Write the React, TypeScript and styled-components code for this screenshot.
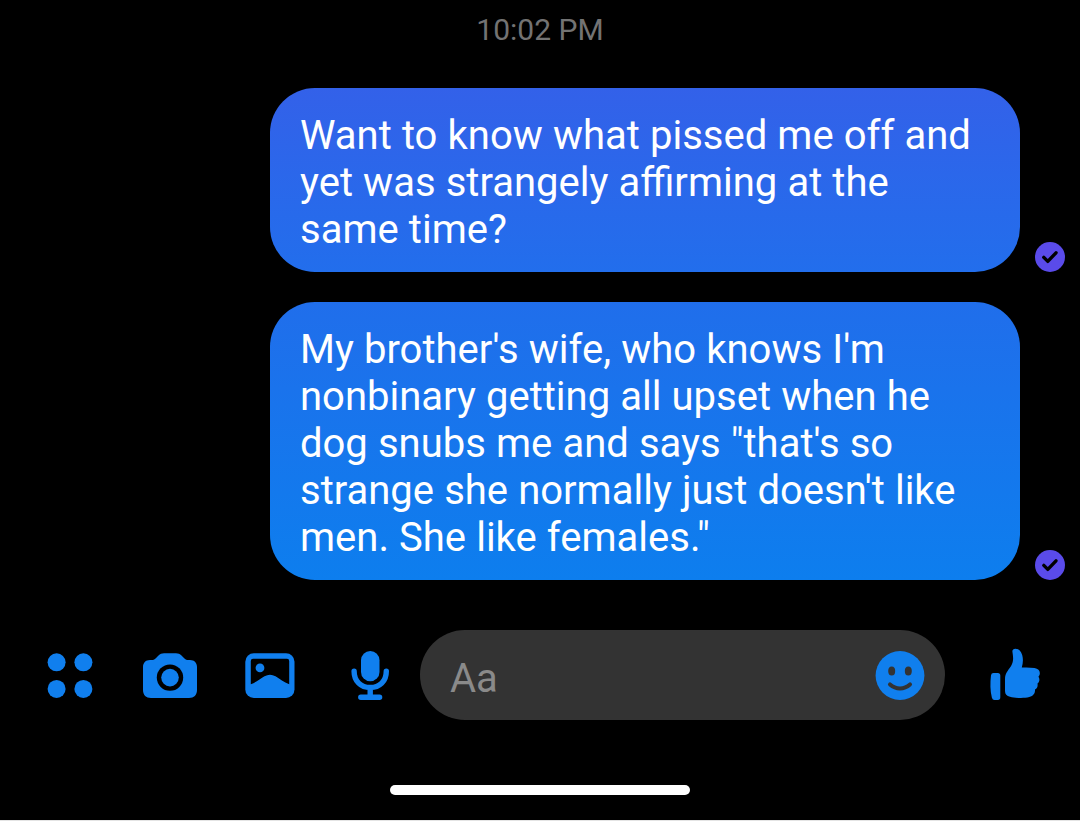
import type { ReactNode } from "react";
import styled, { createGlobalStyle } from "styled-components";

const GlobalStyle = createGlobalStyle`
  body {
    margin: 0;
    background: #e4e4e4;
    font-family: Roboto, sans-serif;
  }
`;

const Screen = styled.main`
  display: flex;
  flex-direction: column;
  width: 1080px;
  height: 820px;
  background: #000;
  overflow: hidden;
`;

const Timestamp = styled.time`
  height: 59px;
  line-height: 59px;
  text-align: center;
  font-size: 30px;
  color: #737373;
`;

const Thread = styled.section`
  display: flex;
  flex-direction: column;
  gap: 30px;
  padding: 29.4px 15px 0 270px;
`;

const MessageRow = styled.div`
  display: flex;
  align-items: flex-end;
  gap: 15px;
`;

const Bubble = styled.div<{ $from: string; $to: string }>`
  box-sizing: border-box;
  width: 750px;
  padding: 23.6px 30px 19.4px;
  border-radius: 45px;
  background: linear-gradient(${(p) => p.$from}, ${(p) => p.$to});
  color: #fff;
  font-size: 40px;
  line-height: 47px;
  word-spacing: 0.2px;
  white-space: pre-line;
`;

const Receipt = styled.svg`
  display: block;
  width: 30px;
  height: 31px;
`;

const Toolbar = styled.footer`
  display: flex;
  height: 90px;
  margin-top: 50px;
  padding-left: 20px;
`;

const IconButton = styled.button`
  width: 100px;
  height: 90px;
  padding: 0;
  border: 0;
  background: none;
  color: #107fee;

  svg {
    display: block;
  }
`;

const Composer = styled.div`
  box-sizing: border-box;
  display: flex;
  align-items: center;
  justify-content: space-between;
  width: 525px;
  height: 90px;
  padding: 0 20px 0 30px;
  border-radius: 45px;
  background: #333;
`;

const Placeholder = styled.span`
  padding-top: 6px;
  font-size: 40px;
  line-height: 47px;
  color: #8a8a8a;
`;

const LikeButton = styled(IconButton)`
  margin-left: 20px;
`;

const HomeIndicator = styled.div`
  width: 300px;
  height: 10px;
  margin: 65px auto 0;
  border-radius: 5px;
  background: #fff;
`;

const Icon = ({ children }: { children: ReactNode }) => (
  <svg width="100" height="90" viewBox="0 0 100 90" fill="currentColor">
    {children}
  </svg>
);

const messages = [
  {
    from: "#3361e9",
    to: "#226eec",
    text: `Want to know what pissed me off and
yet was strangely affirming at the
same time?`,
  },
  {
    from: "#206eeb",
    to: "#0d7eee",
    text: `My brother's wife, who knows I'm
nonbinary getting all upset when he
dog snubs me and says "that's so
strange she normally just doesn't like
men. She like females."`,
  },
];

const App = () => (
  <>
    <GlobalStyle />
    <Screen>
      <Timestamp>10:02 PM</Timestamp>

      <Thread>
        {messages.map((message) => (
          <MessageRow key={message.from}>
            <Bubble $from={message.from} $to={message.to}>
              {message.text}
            </Bubble>
            <Receipt viewBox="0 0 30 31">
              <circle cx="15" cy="16" r="15" fill="#5a4bea" />
              <path
                d="M8.8 16.4l4 4 8.2-8.6"
                fill="none"
                stroke="#000"
                strokeWidth="3.4"
                strokeLinecap="round"
                strokeLinejoin="round"
              />
            </Receipt>
          </MessageRow>
        ))}
      </Thread>

      <Toolbar>
        <IconButton aria-label="More">
          <Icon>
            <circle cx="36.6" cy="32.3" r="9" />
            <circle cx="63.4" cy="32.3" r="9" />
            <circle cx="36.6" cy="58.9" r="9" />
            <circle cx="63.4" cy="58.9" r="9" />
          </Icon>
        </IconButton>
        <IconButton aria-label="Camera">
          <Icon>
            <path d="M44 23.2h12c2.2 0 4 .7 5.5 2.2l3 3c1.2 1.2 2.3 1.6 4 1.6h1.5c4.4 0 7 2.8 7 7v23c0 5-3 8-8 8H31c-5 0-8-3-8-8V37c0-4.2 2.6-7 7-7h1.5c1.7 0 2.8-.4 4-1.6l3-3c1.5-1.5 3.3-2.2 5.5-2.2z" />
            <circle cx="50" cy="47.6" r="13.2" fill="#000" />
            <circle cx="50" cy="47.6" r="8.8" />
          </Icon>
        </IconButton>
        <IconButton aria-label="Gallery">
          <Icon>
            <rect x="25.3" y="23.2" width="49.2" height="44.8" rx="8.5" />
            <path
              d="M33 28.8h34q2.2 0 2.2 2.2v23.2C64 52.3 59.5 48.5 55.5 46.2c-3.7-2-7.3-2-11 0C40.5 48.5 36 52.3 30.8 54.2V31q0-2.2 2.2-2.2z"
              fill="#000"
            />
            <circle cx="40" cy="37.9" r="4.4" />
          </Icon>
        </IconButton>
        <IconButton aria-label="Voice message">
          <Icon>
            <rect x="41" y="21" width="18.5" height="30.2" rx="9.25" />
            <path
              d="M34.1 41.2c0 10 6.7 16.3 16.1 16.3s16.1-6.3 16.1-16.3M50.2 58v8M40.8 67.3h18.8"
              fill="none"
              stroke="currentColor"
              strokeWidth="5.4"
              strokeLinecap="round"
            />
          </Icon>
        </IconButton>

        <Composer>
          <Placeholder>Aa</Placeholder>
          <svg width="50" height="50" viewBox="0 0 50 50">
            <circle cx="25" cy="25.5" r="24.4" fill="#107fee" />
            <ellipse cx="16.7" cy="21" rx="3.5" ry="4.6" fill="#333" />
            <ellipse cx="33.3" cy="21" rx="3.5" ry="4.6" fill="#333" />
            <path
              d="M15 34.4c6 5.3 14 5.3 20 0"
              fill="none"
              stroke="#333"
              strokeWidth="4"
              strokeLinecap="round"
            />
          </svg>
        </Composer>

        <LikeButton aria-label="Like">
          <Icon>
            <path d="M28.5 43h4.3q2.5 0 2.5 2.5v21.8q0 2.7-2.5 2.7h-3.3q-2 0-2.6-2.2c-1.8-7-1.8-15-.9-22.5q.3-2.3 2.5-2.3z" />
            <path d="M50.4 18.7c3.2 0 5.6 2.3 6.8 6.3 1.1 4 .9 8-.4 12.6 4.2-.3 8.6-.2 12.7.5 3.8.7 5.600 2.800 5.300 5.600-.1 1.500-.9 2.400-1.400 3.100 1.400 1.700 1.500 4.700-.9 6.800.5 2.600-.3 4.800-2.500 6 .3 3.300-1.300 6.400-5.700 7.500-5.800 1.500-14 1-19.300-.3-3.300-.9-5-2.500-5-5.800V49.500c0-3.700.6-5.900 2.600-8.600 2.600-3.600 5.200-6.400 5.500-11.900.1-2.700-.5-5.300-.7-7.400-.2-1.900 1-2.900 3-2.900z" />
          </Icon>
        </LikeButton>
      </Toolbar>

      <HomeIndicator />
    </Screen>
  </>
);

export default App;
